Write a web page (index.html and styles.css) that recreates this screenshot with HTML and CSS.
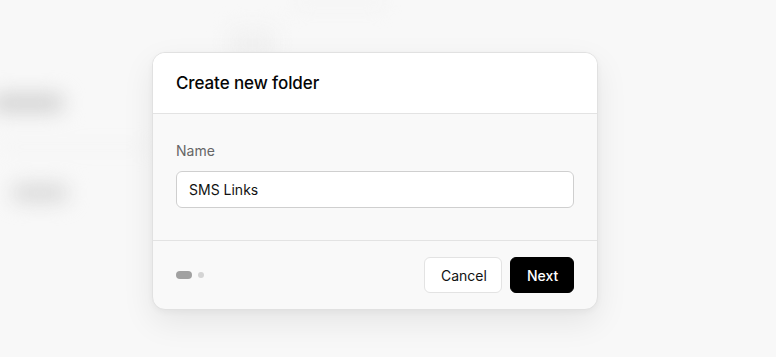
FILE: index.html
```html
<!DOCTYPE html>
<html lang="en">
<head>
<meta charset="utf-8">
<title>Create new folder</title>
<link rel="stylesheet" href="styles.css">
</head>
<body>
<div class="backdrop">
  <div class="bg-top"><span class="bg-chip"></span><span class="bg-bar"></span></div>
  <div class="bg-list">
    <div class="bg-row"><span class="bg-text"></span></div>
    <div class="bg-row"><span class="bg-text short"></span></div>
  </div>
</div>
<div class="overlay">
  <div class="modal">
    <div class="modal-header">
      <h2 class="modal-title">Create new folder</h2>
    </div>
    <div class="modal-body">
      <label class="field-label" for="folder-name">Name</label>
      <input class="field-input" id="folder-name" type="text" value="SMS Links">
    </div>
    <div class="modal-footer">
      <div class="steps">
        <span class="step active"></span>
        <span class="step"></span>
      </div>
      <div class="actions">
        <button class="btn btn-secondary">Cancel</button>
        <button class="btn btn-primary">Next</button>
      </div>
    </div>
  </div>
</div>
</body>
</html>
```
FILE: styles.css
```css
* { box-sizing: border-box; }
html, body {
  margin: 0;
  height: 357px;
  overflow: hidden;
}
body {
  background: #f8f8f8;
  font-family: Inter, "Liberation Sans", sans-serif;
  color: #111;
  position: relative;
}
.backdrop {
  filter: blur(10px);
  height: 100%;
  display: flex;
  flex-direction: column;
}
.bg-top {
  display: flex;
  gap: 20px;
  padding: 0 0 0 230px;
  height: 60px;
  align-items: flex-start;
}
.bg-chip {
  width: 45px;
  height: 30px;
  margin-top: 28px;
  background: #f1f1f1;
  border-radius: 6px;
}
.bg-bar {
  width: 90px;
  height: 5px;
  background: #f0f0f0;
}
.bg-list {
  width: 150px;
  display: flex;
  flex-direction: column;
}
.bg-row {
  height: 90px;
  display: flex;
  align-items: center;
  border-bottom: 2px solid #ededed;
}
.bg-row:first-child { height: 88px; }
.bg-list .bg-row:last-child { border-bottom: none; }
.bg-text {
  display: block;
  width: 72px;
  height: 18px;
  margin-left: -8px;
  background: #d0d0d0;
  border-radius: 8px;
}
.bg-text.short {
  width: 56px;
  margin-left: 12px;
  background: #d8d8d8;
}

.overlay {
  position: absolute;
  inset: 0;
  padding: 52px 0 0 152px;
}
.modal {
  width: 446px;
  background: #f9f9f9;
  border: 1px solid #e1e1e1;
  border-radius: 13px;
  overflow: hidden;
  box-shadow: 0 12px 32px rgba(0, 0, 0, 0.08), 0 2px 6px rgba(0, 0, 0, 0.04);
}
.modal-header {
  background: #ffffff;
  height: 61px;
  padding: 0 23px;
  display: flex;
  align-items: center;
  border-bottom: 1px solid #e3e3e3;
}
.modal-title {
  margin: 0;
  font-size: 17px;
  font-weight: 500;
  letter-spacing: -0.1px;
  color: #050505;
}
.modal-body {
  padding: 27px 23px 32px;
  display: flex;
  flex-direction: column;
  border-bottom: 1px solid #e3e3e3;
}
.field-label {
  font-size: 14px;
  line-height: 20px;
  color: #666666;
  margin-bottom: 10px;
}
.field-input {
  height: 37px;
  width: 100%;
  border: 1px solid #cfcfcf;
  border-radius: 6px;
  background: #ffffff;
  padding: 0 12px;
  font-family: inherit;
  font-size: 14px;
  color: #111;
  outline: none;
}
.modal-footer {
  padding: 16px 23px 16px;
  display: flex;
  align-items: center;
  justify-content: space-between;
}
.steps {
  display: flex;
  align-items: center;
  gap: 6px;
}
.step {
  width: 6px;
  height: 6px;
  border-radius: 3px;
  background: #d4d4d4;
}
.step.active {
  width: 16px;
  height: 8px;
  border-radius: 4px;
  background: #a1a1a1;
}
.actions {
  display: flex;
  gap: 8px;
}
.btn {
  height: 36px;
  border-radius: 6px;
  font-family: inherit;
  font-size: 14px;
  padding: 0 16px;
  cursor: pointer;
}
.btn-secondary {
  width: 78px;
  background: #ffffff;
  border: 1px solid #e3e3e3;
  color: #111;
  font-weight: 400;
}
.btn-primary {
  width: 64px;
  background: #000000;
  border: 1px solid #000000;
  color: #ffffff;
  font-weight: 500;
}
```
